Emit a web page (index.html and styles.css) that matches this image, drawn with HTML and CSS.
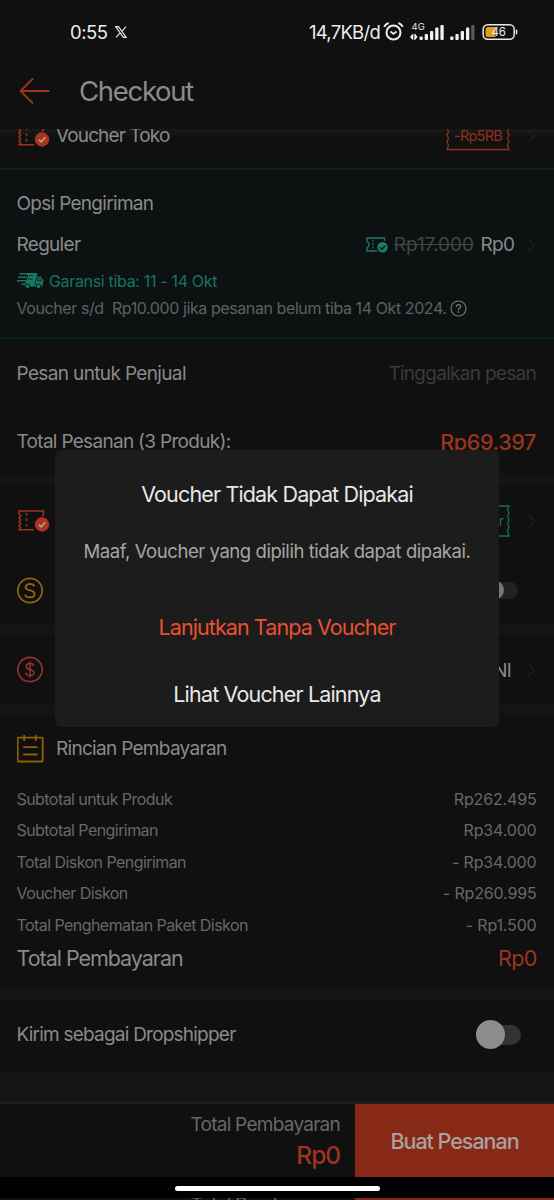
FILE: index.html
```html
<!DOCTYPE html>
<html lang="id">
<head>
<meta charset="utf-8">
<title>Checkout</title>
<link rel="stylesheet" href="styles.css">
</head>
<body>
<svg width="0" height="0" class="defs">
  <symbol id="voucher" viewBox="0 0 34 24">
    <g fill="none" stroke="#9a3321" stroke-width="1.5">
      <path d="M17 20.8H2l1.6-2-1.6-2 1.6-2-1.6-2 1.6-2L2 8.800l1.600-2L2 4.800V2h24.500v3l-1.200 2.500"/>
      <path d="M9.500 4v15" stroke-dasharray="2.500 3"/>
    </g>
    <circle cx="25" cy="15.500" r="7.200" fill="#ab3321"/>
    <path d="M21.800 15.600l2.400 2.300 4.200-4.600" fill="none" stroke="#b9a08f" stroke-width="1.700"/>
  </symbol>
  <symbol id="chevron" viewBox="0 0 9 14"><path d="M1.500 1l6 6-6 6" fill="none" stroke="#1e2020" stroke-width="1.300"/></symbol>
</svg>
<div class="screen">
  <div class="status">
    <span class="clock">0:55</span>
    <svg class="x-logo" width="12" height="12" viewBox="0 0 12 12"><path d="M.7.700h2.800l7.700 10.600H8.400zM11 .6L6.900 5.300M5.200 6.900L1 11.400" fill="none" stroke="#e6e6e6" stroke-width="1.200"/></svg>
    <span class="speed">14,7KB/d</span>
    <svg class="signals" width="142" height="24" viewBox="0 0 142 24">
      <g fill="none" stroke="#ececec" stroke-width="2">
        <circle cx="10.500" cy="12.500" r="7"/>
        <path d="M7.500 11.500l3 2.500 3-2.500" stroke-width="1.700"/>
        <path d="M1.200 6.800Q2.500 4 5.600 3M15.400 3Q18.500 4 19.800 6.800"/>
      </g>
      <text x="28.500" y="9.500" class="net">4G</text>
      <g fill="#f0f0f0">
        <path d="M27.300 16.500l2.700-3v6.500l-2.700-2.500zM34.500 17l-2.500-3.500v6.500zM30.700 14h1v6h-1z"/>
        <rect x="36.500" y="16.500" width="3.300" height="3.500" rx="1"/><rect x="41.700" y="14" width="3.300" height="6" rx="1"/><rect x="47" y="11" width="3.300" height="9" rx="1"/><rect x="52.200" y="7.500" width="3.300" height="12.500" rx="1"/><rect x="57.400" y="5" width="3.300" height="15" rx="1"/>
        <rect x="67.200" y="16.500" width="3.300" height="3.500" rx="1"/><rect x="72.400" y="14" width="3.300" height="6" rx="1"/><rect x="77.700" y="11" width="3.300" height="9" rx="1"/><rect x="83" y="7.500" width="3.300" height="12.500" rx="1"/>
        <rect x="88.200" y="5" width="3.300" height="15" rx="1" fill="#5a5a5a"/>
      </g>
      <rect x="100.200" y="4.700" width="31" height="14.600" rx="4.500" fill="none" stroke="#e8e8e8" stroke-width="1.500"/>
      <path d="M105 7H112.500v10h-7.500a2.500 2.500 0 0 1-2.500-2.500v-5A2.500 2.500 0 0 1 105 7z" fill="#e89a1c"/>
      <rect x="132.800" y="9.500" width="1.500" height="5" rx=".7" fill="#e8e8e8"/>
      <text x="108.500" y="16" class="batt">46</text>
    </svg>
  </div>
  <div class="titlebar">
    <svg width="32" height="28" viewBox="0 0 32 28"><path d="M14 1.500L1.500 14 14 26.500M1.500 14H30.500" fill="none" stroke="#9b3521" stroke-width="1.800"/></svg>
    <h1>Checkout</h1>
  </div>

  <div class="store-voucher">
    <div class="store-voucher-row">
      <svg class="vicon" width="34" height="24"><use href="#voucher"/></svg>
      <span class="t t-store">Voucher Toko</span>
      <span class="coupon">
        <svg width="64" height="31" viewBox="0 0 64 31"><path d="M1 1h62l-1.500 3.500L63 8l-1.500 3.500L63 15l-1.500 3.500L63 22l-1.500 3.500L63 29.500H1l1.500-4L1 22l1.500-3.500L1 15l1.500-3.500L1 8l1.500-3.500z" fill="none" stroke="#8f301e" stroke-width="1.300"/></svg>
        <span class="coupon-text">-Rp5RB</span>
      </span>
      <svg class="chev" width="9" height="14"><use href="#chevron"/></svg>
    </div>
  </div>

  <div class="shipping">
    <div class="row h-ship-title"><span class="t">Opsi Pengiriman</span></div>
    <div class="row h-reguler">
      <span class="t">Reguler</span>
      <span class="price">
        <svg width="22" height="17" viewBox="0 0 22 17"><path d="M11 15H1v-3.400q2-.5 2-3t-2-3V2h17.500v3" fill="none" stroke="#177b68" stroke-width="1.400"/><path d="M7 3.500v11" fill="none" stroke="#177b68" stroke-width="1.300" stroke-dasharray="2 1.500"/><circle cx="16.500" cy="11.300" r="5.200" fill="#178069"/><path d="M14 11.300l1.900 1.900 3.200-3.500" fill="none" stroke="#0d1112" stroke-width="1.300"/></svg>
        <s>Rp17.000</s>
        <span class="free">Rp0</span>
        <svg class="chev" width="9" height="14"><use href="#chevron"/></svg>
      </span>
    </div>
    <div class="row h-guarantee">
      <svg width="27" height="17" viewBox="0 0 27 17"><path d="M10 1H20.500l-.7 3.500h3.700L26.500 8.500l-1.200 6H7.500L9 9l2-4z" fill="#177866"/><path d="M2.500 1.700h9M1 5.200h9M0 8.700h9M4.500 12.200h5" stroke="#177866" stroke-width="1.500"/><g fill="#177866" stroke="#0d1112" stroke-width=".9"><circle cx="10.500" cy="14.300" r="2.300"/><circle cx="21.500" cy="14.300" r="2.300"/></g><path d="M12 3.500h4M11 7.200h4.500M19.700 4.500l-1.700 8M21 6.300h2l1.500 2.400h-4z" fill="none" stroke="#0d1112" stroke-width=".7"/></svg>
      <span class="guarantee">Garansi tiba: 11 - 14 Okt</span>
    </div>
    <div class="row h-note">
      <span class="note">Voucher s/d&nbsp; Rp10.000 jika pesanan belum tiba 14 Okt 2024.</span>
      <svg width="17" height="17" viewBox="0 0 17 17"><circle cx="8.500" cy="8.500" r="7.500" fill="none" stroke="#747777" stroke-width="1.200"/><path d="M6.300 6.900q0-2.300 2.200-2.300t2.200 2q0 1-1.100 1.700T8.500 10" fill="none" stroke="#747777" stroke-width="1.300"/><circle cx="8.500" cy="12" r=".9" fill="#747777"/></svg>
    </div>
  </div>

  <div class="order">
    <div class="row h-msg"><span class="t t-msg">Pesan untuk Penjual</span><span class="hint">Tinggalkan pesan</span></div>
    <div class="row h-total"><span class="t">Total Pesanan (3 Produk):</span><span class="order-total">Rp69.397</span></div>
  </div>

  <div class="card platform">
    <div class="row h-pv">
      <svg class="vicon" width="34" height="24"><use href="#voucher"/></svg>
      <span class="coupon teal">
        <svg width="64" height="32" viewBox="0 0 64 32"><path d="M1 1h62l-1.500 3.500L63 8l-1.500 3.500L63 15l-1.500 3.500L63 22l-1.500 3.500L63 31H1z" fill="none" stroke="#146e5d" stroke-width="1.300"/></svg>
        <span class="coupon-text">Ongkir</span>
      </span>
      <svg class="chev" width="9" height="14"><use href="#chevron"/></svg>
    </div>
    <div class="row h-coins">
      <svg width="27" height="27" viewBox="0 0 27 27"><circle cx="13" cy="13.500" r="12.200" fill="none" stroke="#956609" stroke-width="1.700"/><path d="M17.500 9.300Q16.500 6.800 13 6.800T8.500 10q0 2.500 4.500 3.300T17.500 17q0 3.400-4.500 3.400T8.300 17.500" fill="none" stroke="#956609" stroke-width="1.800"/></svg>
      <span class="toggle small"></span>
    </div>
  </div>

  <div class="card method">
    <div class="row">
      <svg width="27" height="27" viewBox="0 0 27 27"><g fill="none" stroke="#94302d" stroke-width="1.700"><circle cx="13" cy="13.500" r="12.200"/><path d="M16.800 10.200Q16.500 7.600 13 7.600t-3.800 2.800q0 2.200 3.800 3t4 3.200q0 3-4 3t-4.100-3M13 5.200v16.800" stroke-width="1.500"/></g></svg>
      <span class="bank">Bank BNI</span>
      <svg class="chev" width="9" height="14"><use href="#chevron"/></svg>
    </div>
  </div>

  <div class="card details">
    <div class="row h-details">
      <svg width="27" height="29" viewBox="0 0 27 29"><path d="M1.700 3.700h23a1 1 0 0 1 1 1V26.500a1 1 0 0 1-1 1H1.700a1 1 0 0 1-1-1V4.700a1 1 0 0 1 1-1zM7.200 1v6M18.700 1v6M6.200 13.200h14.500M6.200 20.500h14.500" fill="none" stroke="#8a6009" stroke-width="1.800"/></svg>
      <span class="t">Rincian Pembayaran</span>
    </div>
    <div class="line"><span>Subtotal untuk Produk</span><b>Rp262.495</b></div>
    <div class="line"><span>Subtotal Pengiriman</span><b>Rp34.000</b></div>
    <div class="line"><span>Total Diskon Pengiriman</span><b>- Rp34.000</b></div>
    <div class="line"><span>Voucher Diskon</span><b>- Rp260.995</b></div>
    <div class="line"><span>Total Penghematan Paket Diskon</span><b>- Rp1.500</b></div>
    <div class="line grand"><span>Total Pembayaran</span><b>Rp0</b></div>
  </div>

  <div class="card dropship">
    <div class="row"><span class="t t-drop">Kirim sebagai Dropshipper</span><span class="toggle"></span></div>
  </div>

  <div class="spacer"></div>

  <div class="footer">
    <div class="footer-total"><span class="ft-label">Total Pembayaran</span><span class="ft-value">Rp0</span></div>
    <div class="buy">Buat Pesanan</div>
  </div>
  <div class="homebar"><div class="pill"></div></div>
  <div class="sliver"><div class="sliver-left"><span class="ft-label">Total Pembayaran</span></div><div class="sliver-right"></div></div>

  <div class="dialog">
    <div class="dialog-title">Voucher Tidak Dapat Dipakai</div>
    <div class="dialog-body">Maaf, Voucher yang dipilih tidak dapat dipakai.</div>
    <div class="dialog-btn primary">Lanjutkan Tanpa Voucher</div>
    <div class="dialog-btn">Lihat Voucher Lainnya</div>
  </div>
</div>
</body>
</html>
```
FILE: styles.css
```css
* { box-sizing: border-box; }
body { margin: 0; background: #101010; font-family: Inter, "Liberation Sans", sans-serif; }
svg { display: block; flex: none; }
.defs { position: absolute; }
.screen { position: relative; width: 554px; height: 1200px; overflow: hidden; display: flex; flex-direction: column; white-space: nowrap; color: #8a8a8a; }
.screen > * { flex: none; }

.status { height: 64px; display: flex; align-items: center; padding-left: 70px; color: #ececec; font-size: 18.5px; }
.clock { letter-spacing: -.5px; width: 44.500px; }
.speed { letter-spacing: -.74px; margin-left: 182.500px; width: 74px; }
.net { font-size: 9.500px; fill: #e8e8e8; }
.batt { font-size: 11.500px; fill: #eee; letter-spacing: -.2px; }
.titlebar { height: 65px; display: flex; align-items: center; padding: 0 0 11px 19px; gap: 28px; }
h1 { margin: 0; font-size: 27.500px; font-weight: 400; letter-spacing: -1.300px; color: #8b8b8b; }

.t { font-size: 19px; letter-spacing: -.7px; }
.t-store { letter-spacing: -.88px; margin-left: 5.500px; }
.t-msg { letter-spacing: -.64px; }
.t-drop { letter-spacing: -.78px; }
.row { display: flex; align-items: center; padding: 0 18px 0 16.500px; justify-content: space-between; }

.store-voucher { height: 39px; overflow: hidden; display: flex; align-items: flex-end; background: linear-gradient(#191919, #101010 10px); }
.store-voucher-row { flex: 1; height: 65px; display: flex; align-items: center; padding: 0 18px 0 16.500px; }
.vicon { margin-top: 1px; }
.coupon { margin-left: auto; display: grid; place-items: center; }
.coupon > * { grid-area: 1 / 1; }
.coupon-text { font-size: 14.500px; letter-spacing: -.75px; color: #8f301e; }
.coupon + .chev { margin-left: 17px; }

.shipping { height: 171px; background: #0d1112; border: solid #0c2020; border-width: 2px 0; }
.h-ship-title { height: 66px; }
.h-reguler { height: 17px; }
.price { display: flex; align-items: center; font-size: 19px; }
.price s { margin-left: 6px; color: #424545; }
.free { margin-left: 6.500px; letter-spacing: -.6px; }
.price .chev { margin-left: 12.500px; }
.h-guarantee { height: 55px; justify-content: flex-start; gap: 5.500px; }
.guarantee { font-size: 16px; letter-spacing: -.33px; color: #177463; }
.h-note { height: 0; justify-content: flex-start; gap: 3px; }
.note { font-size: 16px; letter-spacing: -.41px; color: #5e6161; }

.order { height: 135px; padding-top: 1px; }
.h-msg { height: 67px; }
.hint { font-size: 19px; letter-spacing: -.71px; color: #3b3b3b; }
.h-total { height: 69px; }
.order-total { font-size: 21.500px; font-weight: 500; letter-spacing: -.36px; color: #9c3420; }

.card { border-top: 11px solid #141414; }
.platform { height: 150px; }
.h-pv { height: 71px; padding-right: 18px; }
.teal .coupon-text { color: #146e5d; margin-left: 10px; }
.h-coins { height: 68px; padding-right: 36px; }
.toggle { width: 45px; height: 20px; border-radius: 10px; background: #333; display: flex; align-items: center; }
.toggle::before { content: ""; width: 29px; height: 29px; flex: none; border-radius: 50%; background: #8c8c8c; }
.toggle.small { width: 41px; height: 17px; background: #222; }
.toggle.small::before { width: 20px; height: 20px; margin-left: 7px; background: #777; }

.method { height: 80px; }
.method .row { height: 69px; padding-right: 18px; }
.bank { margin-left: auto; margin-right: 16px; font-size: 18.500px; letter-spacing: -.7px; }

.details { height: 284px; border-top-width: 10px; }
.h-details { height: 69px; justify-content: flex-start; gap: 12.500px; }
.line { height: 31.500px; display: flex; align-items: center; justify-content: space-between; padding: 0 17.500px 0 16.500px; font-size: 16px; letter-spacing: -.56px; color: #686868; }
.line b { font-weight: 400; letter-spacing: -.16px; }
.line.grand { height: 35px; font-size: 21.500px; letter-spacing: -1.030px; color: #8a8a8a; }
.line.grand b { color: #9c3420; letter-spacing: -.7px; }

.dropship { height: 83px; }
.dropship .row { height: 71px; padding-right: 33px; }
.spacer { height: 33px; background: linear-gradient(#141414 28px, #202020); }

.footer { height: 73px; display: flex; }
.footer-total { width: 355px; padding: 5px 15px 0 0; display: flex; flex-direction: column; align-items: flex-end; }
.ft-label { font-size: 19px; line-height: 31px; letter-spacing: -.74px; color: #686868; }
.ft-value { font-size: 24.500px; line-height: 30px; font-weight: 500; letter-spacing: -1.050px; color: #9c3420; }
.buy { flex: 1; display: grid; place-items: center; background: #882817; color: #aaa09e; font-size: 21.500px; font-weight: 500; letter-spacing: -1.030px; }
.homebar { height: 21px; background: #000; display: flex; justify-content: center; align-items: flex-start; padding-top: 9px; }
.pill { width: 205px; height: 5px; border-radius: 3px; background: #fff; }
.sliver { height: 2px; display: flex; overflow: hidden; }
.sliver-left { width: 355px; display: flex; justify-content: flex-end; padding-right: 15px; align-items: flex-start; }
.sliver-left .ft-label { margin-top: -9px; }
.sliver-right { flex: 1; background: #882817; }

.dialog { position: absolute; left: 55px; top: 450px; width: 444px; height: 277px; border-radius: 6px; background: #1c1c1c; color: #e8e8e8; text-align: center; }
.dialog-title { line-height: 30px; padding-top: 29px; font-size: 21.500px; letter-spacing: -.85px; }
.dialog-body { line-height: 30px; margin-top: 27px; font-size: 18.500px; letter-spacing: -.44px; color: #a6a6a6; }
.dialog-btn { height: 67px; line-height: 67px; font-size: 21.500px; letter-spacing: -.83px; border-top: 1px solid #191919; }
.dialog-btn.primary { margin-top: 27px; color: #e8502f; letter-spacing: -.92px; }
```
